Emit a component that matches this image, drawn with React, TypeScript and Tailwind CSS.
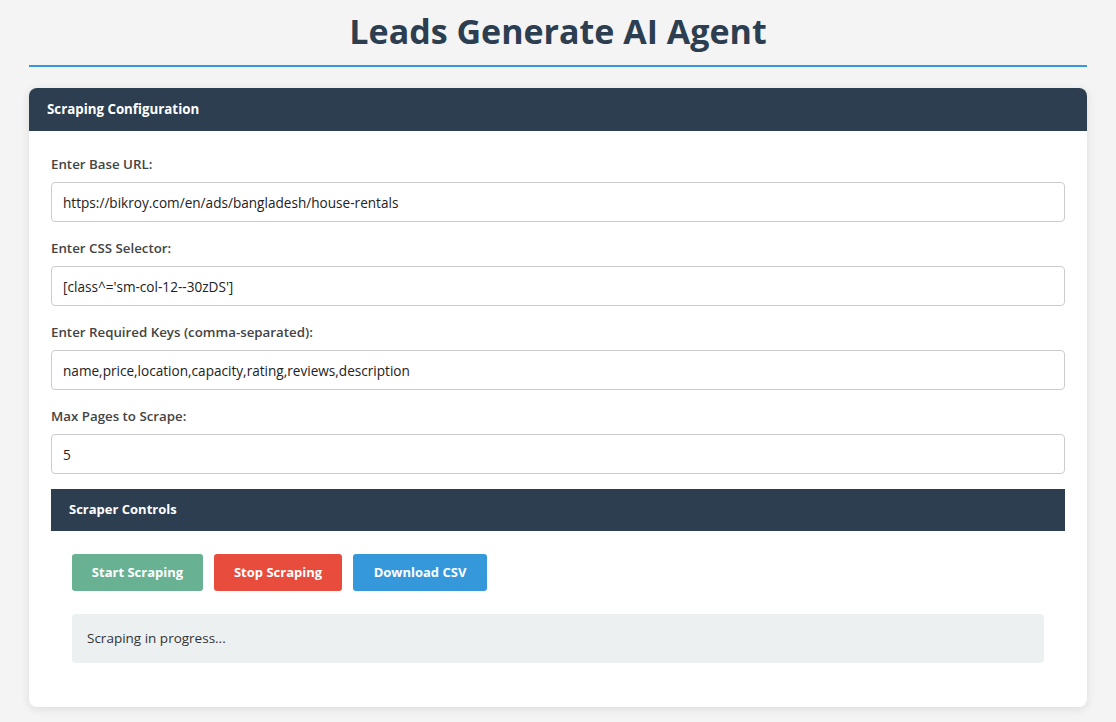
export default function App() {
  const fields = [
    { label: "Enter Base URL:", value: "https://bikroy.com/en/ads/bangladesh/house-rentals" },
    { label: "Enter CSS Selector:", value: "[class^='sm-col-12--30zDS']" },
    { label: "Enter Required Keys (comma-separated):", value: "name,price,location,capacity,rating,reviews,description" },
    { label: "Max Pages to Scrape:", value: "5" },
  ];

  return (
    <div
      className="min-h-screen bg-[#f4f4f4] px-[29px] pb-[15px] text-[#333]"
      style={{ fontFamily: '"Open Sans", "Noto Sans", sans-serif' }}
    >
      {/* Header */}
      <div className="border-b-2 border-[#3498db] pt-[9px] pb-[12px]">
        <h1 className="text-center text-[34px] font-bold leading-[44px] text-[#2c3e50]">
          Leads Generate AI Agent
        </h1>
      </div>

      {/* Card */}
      <div className="mt-[21px] overflow-hidden rounded-lg bg-white shadow-[0_2px_10px_rgba(0,0,0,0.1)]">
        <div className="flex h-[43px] items-center bg-[#2c3e50] px-[18px] text-[13.3px] font-bold text-white">
          Scraping Configuration
        </div>

        <div className="px-[22px] pt-[24px] pb-[22px]">
          <div className="flex flex-col gap-[17px]">
            {fields.map((f) => (
              <div key={f.label}>
                <label className="mb-[9px] block text-[13.3px] leading-[18px] font-semibold text-[#444]">
                  {f.label}
                </label>
                <input
                  readOnly
                  value={f.value}
                  className="h-[40px] w-full rounded border border-[#ccc] px-[11px] text-[13.6px] text-[#222] outline-none"
                />
              </div>
            ))}
          </div>

          {/* Controls */}
          <div className="mt-[15px] flex h-[42px] items-center bg-[#2c3e50] px-[18px] text-[13px] font-bold text-white">
            Scraper Controls
          </div>
          <div className="px-[21px] pt-[23px] pb-[22px]">
            <div className="flex gap-[11px]">
              <button className="h-[37px] w-[131px] rounded-[3px] bg-[#69b193] text-[13px] font-bold text-white">
                Start Scraping
              </button>
              <button className="h-[37px] w-[128px] rounded-[3px] bg-[#e74c3c] text-[13px] font-bold text-white">
                Stop Scraping
              </button>
              <button className="h-[37px] w-[134px] rounded-[3px] bg-[#3498db] text-[13px] font-bold text-white">
                Download CSV
              </button>
            </div>
            <div className="mt-[23px] flex h-[49px] items-center rounded bg-[#ecf0f1] px-[15px] text-[13.5px] text-[#333]">
              Scraping in progress...
            </div>
          </div>
        </div>
      </div>
    </div>
  );
}
